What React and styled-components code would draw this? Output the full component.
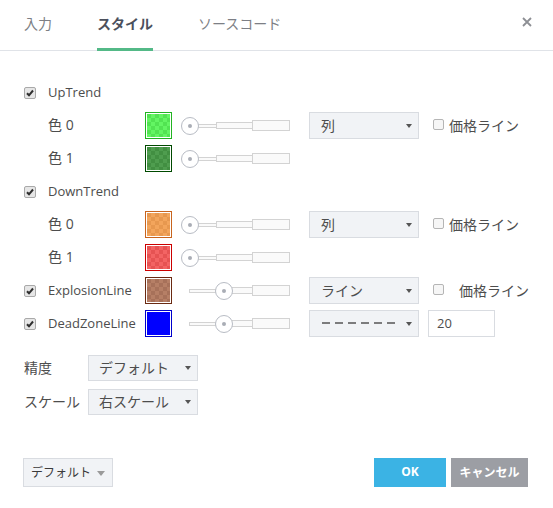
import React from "react";
import styled, { createGlobalStyle } from "styled-components";

const Global = createGlobalStyle`
  html, body { margin: 0; padding: 0; background: #fff; }
  body {
    font-family: "Open Sans", "Noto Sans CJK JP", sans-serif;
    font-size: 14px;
    color: #4a4a4a;
  }
  * { box-sizing: border-box; }
`;

const Dialog = styled.div`
  width: 553px;
  height: 508px;
  background: #fff;
  display: flex;
  flex-direction: column;
`;

const Header = styled.div`
  height: 51px;
  border-bottom: 1px solid #e0e3e8;
  display: flex;
  align-items: stretch;
  padding-left: 24px;
  padding-right: 21px;
`;

const Tabs = styled.div`
  display: flex;
  gap: 45px;
  flex: 1;
`;

const Tab = styled.div`
  display: flex;
  align-items: center;
  padding-bottom: 2px;
  font-size: 14px;
  font-weight: ${(p) => (p.$active ? 700 : 400)};
  color: ${(p) => (p.$active ? "#4b505c" : "#7d7f85")};
  border-bottom: 3px solid ${(p) => (p.$active ? "#53b987" : "transparent")};
  margin-bottom: -1px;
`;

const Close = styled.div`
  display: flex;
  align-items: center;
  padding-bottom: 6px;
`;

const Body = styled.div`
  padding: 25px 0 0 24px;
  display: flex;
  flex-direction: column;
`;

const Row = styled.div`
  height: 33px;
  display: flex;
  align-items: center;
`;

const CheckCell = styled.div`
  width: 24px;
  display: flex;
  align-items: center;
`;

const Box = styled.span`
  width: ${(p) => p.$size}px;
  height: ${(p) => p.$size}px;
  border-radius: 2px;
  border: 1px solid ${(p) => (p.$checked ? "#a9a9a9" : "#b5b5b5")};
  background: ${(p) => (p.$checked ? "#e6e6e6" : "#f6f6f6")};
  display: inline-flex;
  align-items: center;
  justify-content: center;
  flex: none;
`;

const Label = styled.div`
  width: 97px;
  font-size: ${(p) => (p.$latin ? "13px" : "14px")};
  line-height: 18px;
  padding-bottom: 2px;
  color: #4d4d4d;
  white-space: nowrap;
`;

const Swatch = styled.div`
  width: 27px;
  height: 27px;
  border: 1px solid ${(p) => p.$border};
  padding: 1px;
  background: #fff;
  flex: none;
  margin-top: -1px;
`;

const SwatchFill = styled.div`
  width: 100%;
  height: 100%;
  background: repeating-conic-gradient(${(p) => p.$a} 0 25%, ${(p) => p.$b} 0 50%) 0 0 / 8px 8px;
`;

const Slider = styled.div`
  position: relative;
  width: 110px;
  margin-left: 9px;
  height: 20px;
  padding-left: 9px;
  display: flex;
  align-items: center;
`;

const Seg = styled.div`
  height: ${(p) => p.$h}px;
  width: ${(p) => p.$w}px;
  border: 1px solid #d3d3d3;
  background: #fafafa;
  margin-left: -1px;
`;

const Thumb = styled.div`
  position: absolute;
  top: 1px;
  width: 18px;
  height: 18px;
  border-radius: 50%;
  border: 1px solid #b8bcc4;
  background: #fff;
  display: flex;
  align-items: center;
  justify-content: center;
  &::after {
    content: "";
    width: 4px;
    height: 4px;
    border-radius: 50%;
    background: #a9adb5;
  }
`;

const Select = styled.div`
  width: 110px;
  height: ${(p) => p.$h || 27}px;
  margin-left: ${(p) => p.$ml || 0}px;
  background: #f1f3f6;
  border: 1px solid #d9dce1;
  display: flex;
  align-items: center;
  justify-content: space-between;
  padding: 0 6px 2px ${(p) => p.$pl || 11}px;
  font-size: 14px;
  color: #4d4d4d;
  flex: none;
`;

const Caret = styled.span`
  width: 0;
  height: 0;
  margin-top: 2px;
  border-left: ${(p) => p.$s || 3.5}px solid transparent;
  border-right: ${(p) => p.$s || 3.5}px solid transparent;
  border-top: ${(p) => (p.$s ? p.$s + 1 : 4)}px solid ${(p) => p.$color || "#555"};
`;

const Price = styled.div`
  display: flex;
  align-items: center;
  gap: ${(p) => p.$gap}px;
  margin-left: 14px;
  padding-bottom: 2px;
  font-size: 14px;
  color: #4d4d4d;
  white-space: nowrap;
`;

const NumInput = styled.div`
  width: 67px;
  height: 27px;
  margin-left: 9px;
  border: 1px solid #d9dce1;
  background: #fff;
  display: flex;
  align-items: center;
  padding: 0 0 2px 8px;
  font-size: 13px;
  color: #4d4d4d;
`;

const OptRow = styled.div`
  height: 34px;
  display: flex;
  align-items: center;
`;

const OptLabel = styled.div`
  width: 64px;
  font-size: 14px;
  padding-bottom: 2px;
  color: #4d4d4d;
`;

const Options = styled.div`
  margin-top: 11px;
  display: flex;
  flex-direction: column;
`;

const Footer = styled.div`
  margin-top: auto;
  padding: 0 25px 21px 23px;
  display: flex;
  align-items: center;
`;

const DefaultBtn = styled.div`
  height: 29px;
  width: 90px;
  background: #f1f3f6;
  border: 1px solid #d9dce1;
  display: flex;
  align-items: center;
  justify-content: center;
  gap: 6px;
  padding-bottom: 1px;
  font-size: 12px;
  color: #3a3a3a;
`;

const Spacer = styled.div`
  flex: 1;
`;

const Btn = styled.div`
  height: 29px;
  width: ${(p) => p.$w}px;
  margin-left: ${(p) => p.$ml || 0}px;
  background: ${(p) => p.$bg};
  color: #fff;
  font-weight: 700;
  font-size: 12px;
  padding-bottom: 2px;
  display: flex;
  align-items: center;
  justify-content: center;
`;

const Check = ({ checked, size = 12 }) => (
  <Box $size={size} $checked={checked}>
    {checked && (
      <svg width="8" height="8" viewBox="0 0 8 8">
        <path d="M1 4.2 L3 6.3 L7 1.5" stroke="#2e2e2e" strokeWidth="2" fill="none" />
      </svg>
    )}
  </Box>
);

const ColorSwatch = ({ c }) => (
  <Swatch $border={c.border}>
    <SwatchFill $a={c.a} $b={c.b} />
  </Swatch>
);

const RangeSlider = ({ pos }) => (
  <Slider>
    <Seg $w={28} $h={4} />
    <Seg $w={37} $h={7} />
    <Seg $w={38} $h={11} />
    <Thumb style={{ left: pos }} />
  </Slider>
);

const green0 = { border: "#22b322", a: "#63f563", b: "#52e352" };
const green1 = { border: "#004a00", a: "#4f9d4f", b: "#428f42" };
const orange0 = { border: "#c8641e", a: "#f3a55c", b: "#e7984f" };
const red1 = { border: "#cc0000", a: "#f36464", b: "#e65353" };
const brown = { border: "#6a2a12", a: "#b67f66", b: "#a7715a" };
const blue = { border: "#0000cc", a: "#0000ff", b: "#0000ff" };

const Dashes = () => (
  <svg width="74" height="4" viewBox="0 0 74 4">
    <line x1="0" y1="2" x2="74" y2="2" stroke="#555" strokeWidth="1.3" strokeDasharray="8 5" />
  </svg>
);

export default function App() {
  return (
    <>
      <Global />
      <Dialog>
        <Header>
          <Tabs>
            <Tab>入力</Tab>
            <Tab $active>スタイル</Tab>
            <Tab>ソースコード</Tab>
          </Tabs>
          <Close>
            <svg width="10" height="10" viewBox="0 0 10 10">
              <path d="M1 1 L9 9 M9 1 L1 9" stroke="#8d8f94" strokeWidth="1.8" />
            </svg>
          </Close>
        </Header>
        <Body>
          <Row>
            <CheckCell><Check checked /></CheckCell>
            <Label $latin>UpTrend</Label>
          </Row>
          <Row>
            <CheckCell />
            <Label>色 0</Label>
            <ColorSwatch c={green0} />
            <RangeSlider pos={0} />
            <Select $ml={18}>列<Caret /></Select>
            <Price $gap={5}><Check size={11} />価格ライン</Price>
          </Row>
          <Row>
            <CheckCell />
            <Label>色 1</Label>
            <ColorSwatch c={green1} />
            <RangeSlider pos={0} />
          </Row>
          <Row>
            <CheckCell><Check checked /></CheckCell>
            <Label $latin>DownTrend</Label>
          </Row>
          <Row>
            <CheckCell />
            <Label>色 0</Label>
            <ColorSwatch c={orange0} />
            <RangeSlider pos={0} />
            <Select $ml={18}>列<Caret /></Select>
            <Price $gap={5}><Check size={11} />価格ライン</Price>
          </Row>
          <Row>
            <CheckCell />
            <Label>色 1</Label>
            <ColorSwatch c={red1} />
            <RangeSlider pos={0} />
          </Row>
          <Row>
            <CheckCell><Check checked /></CheckCell>
            <Label $latin>ExplosionLine</Label>
            <ColorSwatch c={brown} />
            <RangeSlider pos={34} />
            <Select $ml={18}>ライン<Caret /></Select>
            <Price $gap={15}><Check size={11} />価格ライン</Price>
          </Row>
          <Row>
            <CheckCell><Check checked /></CheckCell>
            <Label $latin>DeadZoneLine</Label>
            <ColorSwatch c={blue} />
            <RangeSlider pos={34} />
            <Select $ml={18} $pl={12}><Dashes /><Caret /></Select>
            <NumInput>20</NumInput>
          </Row>
          <Options>
            <OptRow>
              <OptLabel>精度</OptLabel>
              <Select $h={26} $pl={10}>デフォルト<Caret /></Select>
            </OptRow>
            <OptRow>
              <OptLabel>スケール</OptLabel>
              <Select $h={26} $pl={10}>右スケール<Caret /></Select>
            </OptRow>
          </Options>
        </Body>
        <Footer>
          <DefaultBtn>デフォルト<Caret $s={4} $color="#9a9a9a" /></DefaultBtn>
          <Spacer />
          <Btn $w={72} $bg="#3bb3e4">OK</Btn>
          <Btn $w={77} $ml={5} $bg="#9c9ea4">キャンセル</Btn>
        </Footer>
      </Dialog>
    </>
  );
}
